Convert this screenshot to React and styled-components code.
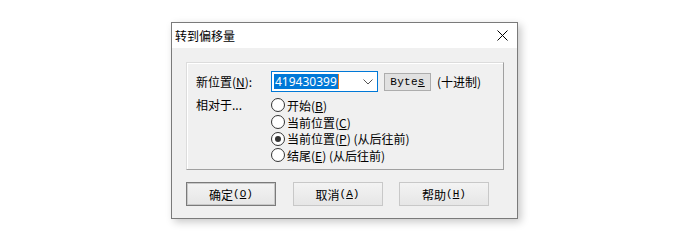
import React from 'react';
import styled, { createGlobalStyle } from 'styled-components';

const GlobalStyle = createGlobalStyle`
  html, body {
    margin: 0;
    padding: 0;
    background: #ffffff;
  }
  body {
    font-family: "Noto Sans CJK SC", "Noto Sans", sans-serif;
    font-size: 12px;
    color: #000;
  }
`;

const Page = styled.div`
  padding: 22px 0 0 171px;
  height: 240px;
  box-sizing: border-box;
`;

const Window = styled.div`
  width: 347px;
  height: 197px;
  box-sizing: border-box;
  border: 1px solid #7a7a7a;
  background: #f0f0f0;
  box-shadow: 3px 3px 8px rgba(0, 0, 0, 0.22);
  display: flex;
  flex-direction: column;
`;

const TitleBar = styled.div`
  height: 25px;
  background: #ffffff;
  display: flex;
  align-items: center;
  justify-content: space-between;
  padding: 0 8px 0 3px;
  flex-shrink: 0;
`;

const Title = styled.span`
  font-size: 12px;
  line-height: 1;
`;

const Close = styled.div`
  width: 12px;
  height: 12px;
  display: flex;
  align-items: center;
  justify-content: center;
  margin-right: 1px;
`;

const Client = styled.div`
  flex: 1;
  padding: 14px 13px 0 14px;
  display: flex;
  flex-direction: column;
`;

const Panel = styled.div`
  height: 108px;
  box-sizing: border-box;
  border: 1px solid #dcdcdc;
  border-right-color: #a0a0a0;
  border-bottom-color: #a0a0a0;
  box-shadow: inset 1px 1px 0 #ffffff;
  padding: 8px 0 0 9px;
`;

const Row = styled.div`
  display: flex;
  align-items: center;
`;

const Label = styled.div`
  width: 75px;
  flex-shrink: 0;
`;

const Combo = styled.div`
  width: 107px;
  height: 21px;
  box-sizing: border-box;
  border: 1px solid #0078d7;
  background: #fff;
  display: flex;
  align-items: center;
  padding: 0 2px;
  justify-content: space-between;
`;

const Selected = styled.span`
  background: #0078d7;
  color: #fff;
  font-family: "Noto Sans", sans-serif;
  font-size: 12px;
  line-height: 15px;
  padding: 0 1px;
  border-right: 1px solid #f07b1a;
`;

const Chevron = styled.div`
  display: flex;
  margin-right: 2px;
`;

const SmallButton = styled.div`
  width: 47px;
  height: 18px;
  box-sizing: border-box;
  margin-left: 6px;
  border: 1px solid #adadad;
  background: #e1e1e1;
  display: flex;
  align-items: center;
  justify-content: center;
  font-family: "Liberation Mono", monospace;
  font-size: 11px;
  letter-spacing: 0.3px;
`;

const Note = styled.span`
  margin-left: 6px;
`;

const Relative = styled.div`
  display: flex;
  margin-top: 5px;
`;

const RelLabel = styled(Label)`
  margin-top: -1px;
`;

const Radios = styled.div`
  display: flex;
  flex-direction: column;
`;

const RadioRow = styled.div`
  display: flex;
  align-items: center;
  height: 16.7px;
`;

const Circle = styled.span`
  width: 12px;
  height: 12px;
  border-radius: 50%;
  border: 1px solid #333;
  background: #fff;
  margin-right: 2px;
  display: flex;
  align-items: center;
  justify-content: center;
  &::after {
    content: '';
    width: 6px;
    height: 6px;
    border-radius: 50%;
    background: ${(p) => (p.$checked ? '#333' : 'transparent')};
  }
`;

const U = styled.span`
  text-decoration: underline;
  text-underline-offset: 1px;
`;

const Buttons = styled.div`
  display: flex;
  gap: 16.5px;
  margin-top: 12px;
`;

const Button = styled.div`
  width: 90px;
  height: 24px;
  box-sizing: border-box;
  border: 1px solid ${(p) => (p.$default ? '#7a7a7a' : '#c8c8c8')};
  box-shadow: ${(p) => (p.$default ? 'inset 0 0 0 1px #c8c8c8' : 'none')};
  background: linear-gradient(#f3f3f3, #e6e6e6);
  display: flex;
  align-items: center;
  justify-content: center;
  font-size: 12px;
`;

const Mono = styled.span`
  font-family: "Liberation Mono", monospace;
  font-size: 11px;
`;

const radios = [
  { text: '开始', key: 'B' },
  { text: '当前位置', key: 'C' },
  { text: '当前位置', key: 'P', extra: ' (从后往前)', checked: true },
  { text: '结尾', key: 'E', extra: ' (从后往前)' },
];

const buttons = [
  { text: '确定', key: 'O', isDefault: true },
  { text: '取消', key: 'A' },
  { text: '帮助', key: 'H' },
];

const App = () => (
  <>
    <GlobalStyle />
    <Page>
      <Window>
        <TitleBar>
          <Title>转到偏移量</Title>
          <Close>
            <svg width="11" height="11" viewBox="0 0 11 11">
              <path d="M0.5 0.5 L10.5 10.5 M10.5 0.5 L0.5 10.5" stroke="#000" strokeWidth="1" />
            </svg>
          </Close>
        </TitleBar>
        <Client>
          <Panel>
            <Row>
              <Label>
                新位置(<U>N</U>):
              </Label>
              <Combo>
                <Selected>419430399</Selected>
                <Chevron>
                  <svg width="10" height="6" viewBox="0 0 10 6">
                    <path d="M0.5 0.5 L5 5 L9.5 0.5" fill="none" stroke="#555" strokeWidth="1" />
                  </svg>
                </Chevron>
              </Combo>
              <SmallButton>
                Byte<U>s</U>
              </SmallButton>
              <Note>(十进制)</Note>
            </Row>
            <Relative>
              <RelLabel>相对于...</RelLabel>
              <Radios>
                {radios.map((r, i) => (
                  <RadioRow key={i}>
                    <Circle $checked={r.checked} />
                    {r.text}(<U>{r.key}</U>){r.extra}
                  </RadioRow>
                ))}
              </Radios>
            </Relative>
          </Panel>
          <Buttons>
            {buttons.map((b) => (
              <Button key={b.key} $default={b.isDefault}>
                {b.text}
                <Mono>
                  (<U>{b.key}</U>)
                </Mono>
              </Button>
            ))}
          </Buttons>
        </Client>
      </Window>
    </Page>
  </>
);

export default App;
